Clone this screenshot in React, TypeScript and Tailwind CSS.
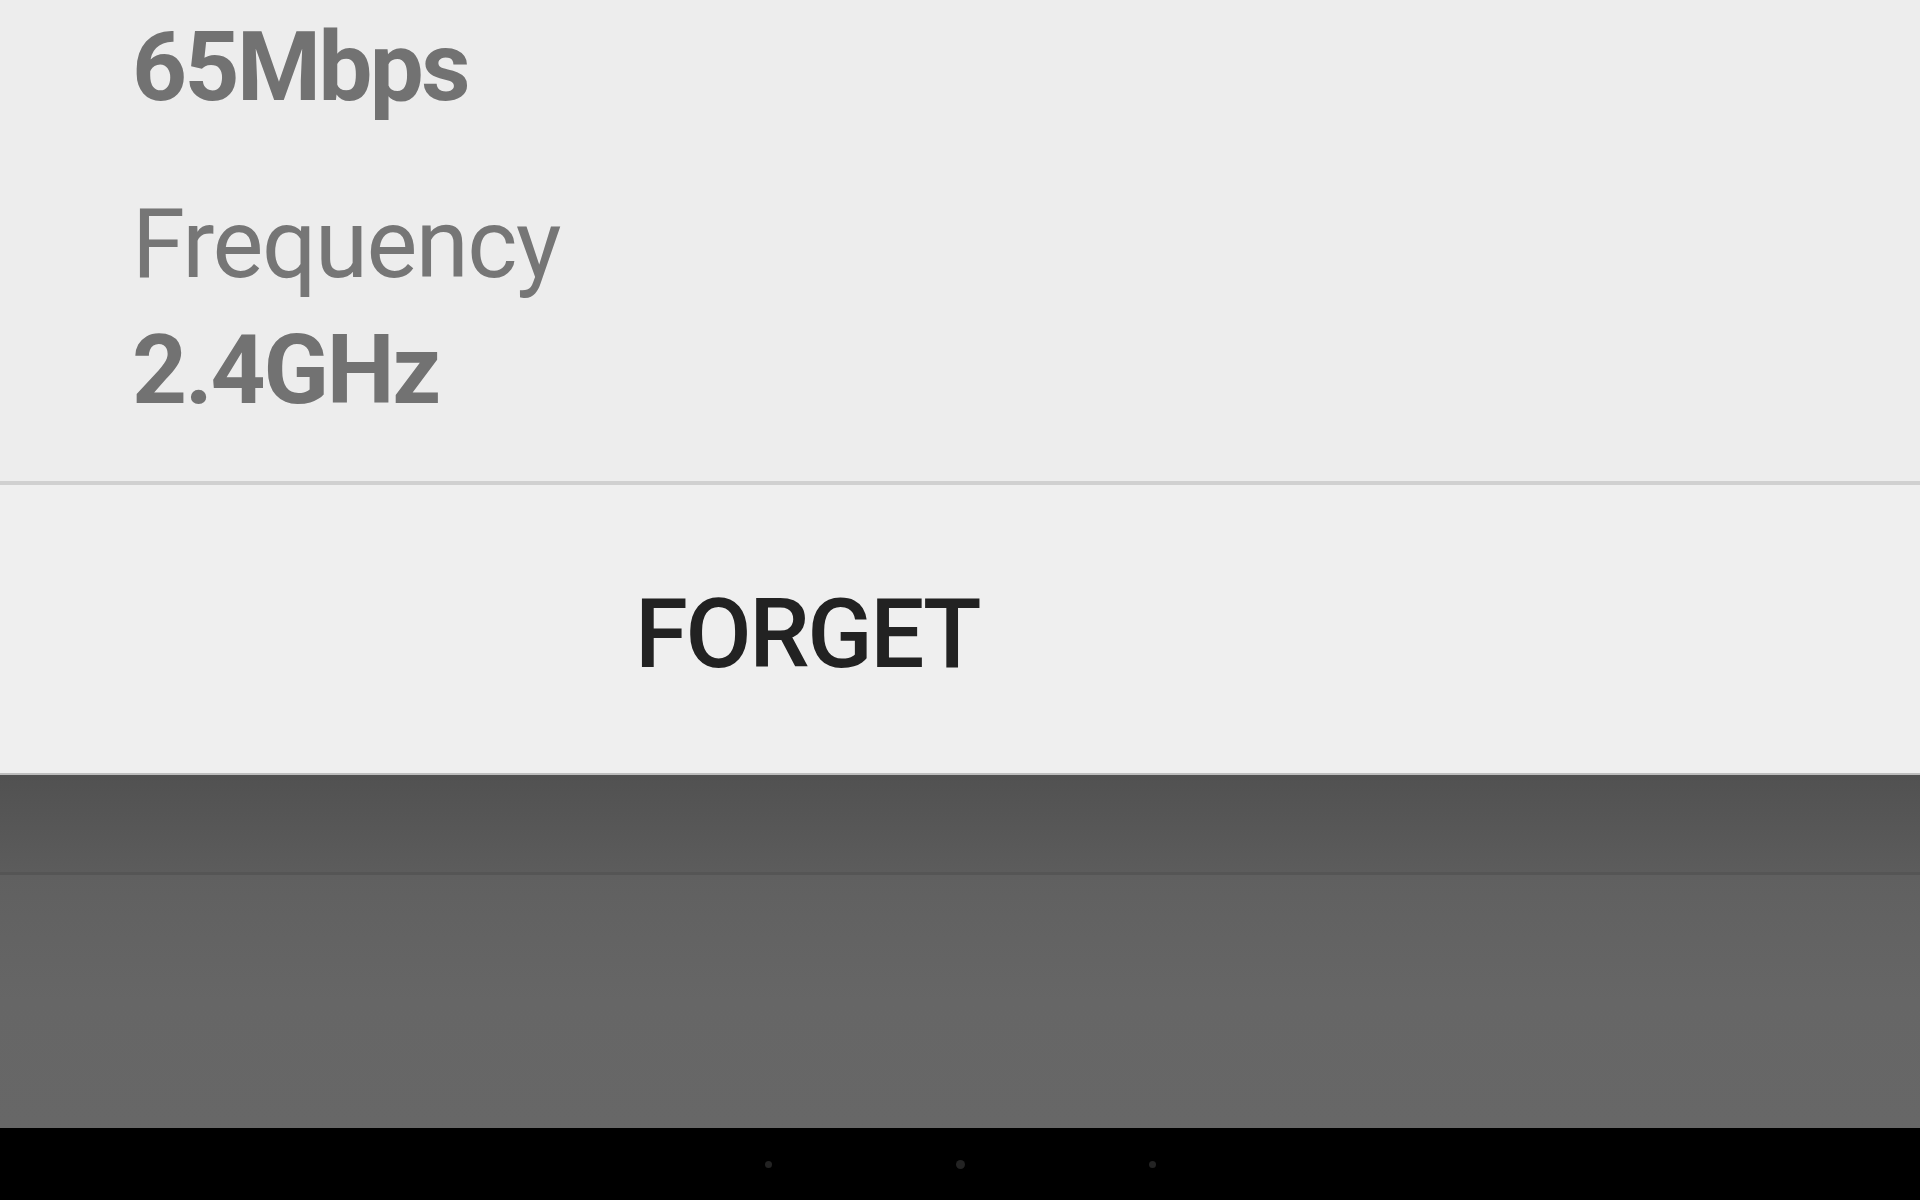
const details = [
  { label: "Frequency", value: "2.4GHz" },
];

function NavDot({ big }: { big?: boolean }) {
  return (
    <div className="w-[192px] flex justify-center">
      <span className={`block rounded-full bg-[#232323] ${big ? "w-[9px] h-[9px]" : "w-[7px] h-[7px]"}`} />
    </div>
  );
}

export default function App() {
  return (
    <div className="w-[1920px] h-[1200px] flex flex-col overflow-hidden bg-black font-['Roboto',sans-serif]">
      {/* network details dialog */}
      <section className="h-[775px] bg-[#ededed] flex flex-col">
        <div className="pl-[132px] pt-[19px]">
          <div className="text-[96px] leading-[96px] font-bold tracking-[-2.6px] text-[#727272]">65Mbps</div>
          {details.map((d) => (
            <div key={d.label} className="mt-[81px]">
              <div className="text-[96px] leading-[96px] tracking-[-1.5px] text-[#767676]">{d.label}</div>
              <div className="mt-[30px] text-[96px] leading-[96px] font-bold tracking-[-2.2px] text-[#727272]">
                {d.value}
              </div>
            </div>
          ))}
        </div>
        <div className="mt-[63px] h-[4px] bg-[#d0d0d0]" />
        <div className="flex-1 bg-[#efefef]">
          <button className="mt-[101px] pl-[635px] text-[96px] leading-[96px] font-medium tracking-[-2.4px] text-[#222222]">
            FORGET
          </button>
        </div>
        <div className="h-[2px] bg-[#bdbdbd]" />
      </section>

      {/* dimmed activity behind the dialog */}
      <div className="h-[97px] bg-gradient-to-b from-[#515151] to-[#5c5c5c]" />
      <div className="h-[3px] bg-[#555555]" />
      <div className="flex-1 bg-gradient-to-b from-[#606060] via-[#666666] to-[#676767]" />

      {/* navigation bar */}
      <nav className="h-[72px] bg-black flex justify-center items-center">
        <NavDot />
        <NavDot big />
        <NavDot />
      </nav>
    </div>
  );
}
